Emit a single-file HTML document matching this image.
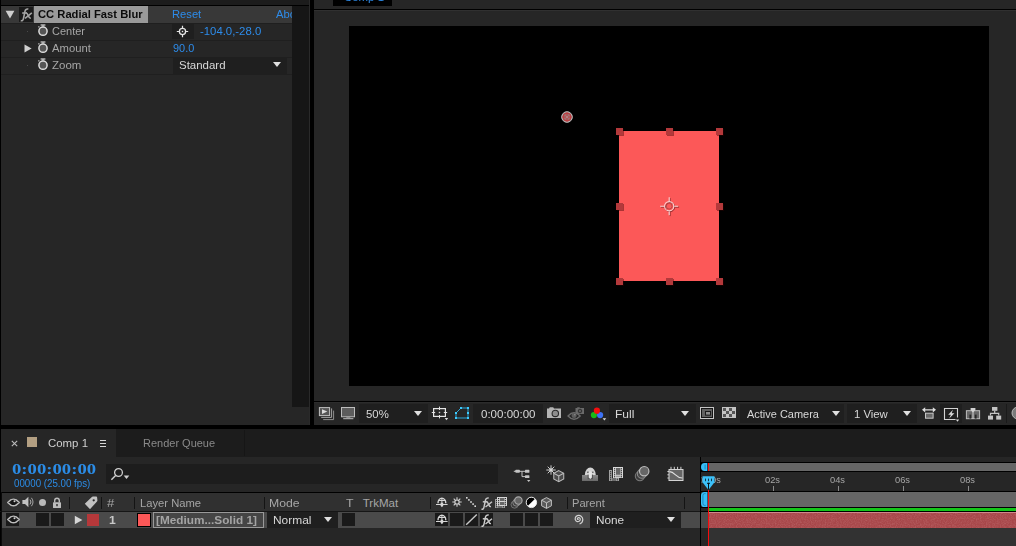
<!DOCTYPE html>
<html>
<head>
<meta charset="utf-8">
<title>After Effects</title>
<style>
html,body{margin:0;padding:0;}
body{width:1016px;height:546px;overflow:hidden;background:#000;position:relative;font-family:"Liberation Sans",sans-serif;font-size:12px;color:#a8a8a8;}
.a{position:absolute;}
.t{position:absolute;white-space:nowrap;transform-origin:0 50%;}
svg{position:absolute;overflow:visible;}
.bx{position:absolute;width:13px;height:13px;background:#1a1a1a;top:513px;}
.sep{position:absolute;width:1px;height:12px;top:497px;background:#141414;}
.dd{position:absolute;background:#1f1f1f;}
.arr{position:absolute;width:0;height:0;margin-left:0.2px;border-left:4.8px solid transparent;border-right:4.8px solid transparent;border-top:5.6px solid #e0e0e0;}
</style>
</head>
<body>

<!-- ================= EFFECT CONTROLS PANEL ================= -->
<div class="a" style="left:1px;top:0;width:309px;height:425px;background:#262626;"></div>
<div class="a" style="left:1px;top:0;width:309px;height:5px;background:#1c1c1c;"></div>
<div class="a" style="left:0;top:5px;width:310px;height:1px;background:#000;"></div>
<div class="a" style="left:1px;top:6px;width:291px;height:17px;background:#383838;"></div>
<div class="a" style="left:1px;top:23px;width:291px;height:1px;background:#1f1f1f;"></div>
<div class="a" style="left:1px;top:40px;width:291px;height:1px;background:#1f1f1f;"></div>
<div class="a" style="left:1px;top:57px;width:291px;height:1px;background:#1f1f1f;"></div>
<div class="a" style="left:1px;top:74px;width:291px;height:1px;background:#1f1f1f;"></div>
<div class="a" style="left:292px;top:6px;width:17px;height:401px;background:#161616;"></div>
<div class="a" style="left:309px;top:0;width:1px;height:425px;background:#2a2a2a;"></div>
<div class="a" style="left:34px;top:6px;width:114px;height:17px;background:#9a9a9a;"></div>
<div class="a" style="left:19px;top:7px;width:14px;height:15px;background:#1a1a1a;"></div>
<div class="dd" style="left:172px;top:24px;width:22px;height:15px;"></div>
<div class="dd" style="left:173px;top:58px;width:114px;height:16px;"></div>
<div class="arr" style="left:273px;top:62px;"></div>

<svg style="left:5px;top:10px" width="10" height="9" viewBox="0 0 10 9"><path d="M0.6 0.8 L9.4 0.8 L5 8.4 Z" fill="#cfcfcf"/></svg>
<svg style="left:19.6px;top:8.2px" width="13.2" height="13.6" viewBox="0 0 12 13"><g fill="none" stroke="#a4a4a4" stroke-width="1.55"><path d="M0.4 12.1 C1.9 12.5 2.7 11.7 3 10.2 L4.5 3 C4.85 1.4 5.9 0.7 7.7 1"/><path d="M1.8 4.8 H6.4"/><path d="M5.4 4.8 C6.6 4.6 6.9 5.6 7.5 7.2 C8.1 8.8 8.6 9.9 10 9.6"/><path d="M11 4.7 L4.5 10"/></g></svg>
<svg style="left:36.5px;top:23px" width="12" height="14" viewBox="0 0 12 14"><circle cx="6" cy="8.2" r="4.1" fill="#555" stroke="#dcdcdc" stroke-width="1.5"/><rect x="3.6" y="1.4" width="4.8" height="1.2" fill="#d4d4d4"/><rect x="5.5" y="2" width="1" height="2" fill="#d4d4d4"/><rect x="1.2" y="3.2" width="1.3" height="1.3" fill="#bdbdbd"/></svg><svg style="left:36.5px;top:40px" width="12" height="14" viewBox="0 0 12 14"><circle cx="6" cy="8.2" r="4.1" fill="#555" stroke="#dcdcdc" stroke-width="1.5"/><rect x="3.6" y="1.4" width="4.8" height="1.2" fill="#d4d4d4"/><rect x="5.5" y="2" width="1" height="2" fill="#d4d4d4"/><rect x="1.2" y="3.2" width="1.3" height="1.3" fill="#bdbdbd"/></svg><svg style="left:36.5px;top:57px" width="12" height="14" viewBox="0 0 12 14"><circle cx="6" cy="8.2" r="4.1" fill="#555" stroke="#dcdcdc" stroke-width="1.5"/><rect x="3.6" y="1.4" width="4.8" height="1.2" fill="#d4d4d4"/><rect x="5.5" y="2" width="1" height="2" fill="#d4d4d4"/><rect x="1.2" y="3.2" width="1.3" height="1.3" fill="#bdbdbd"/></svg>
<div class="a" style="left:27px;top:31px;width:1px;height:1px;background:#4a4a4a;"></div>
<div class="a" style="left:27px;top:65px;width:1px;height:1px;background:#4a4a4a;"></div>
<svg style="left:24px;top:44px" width="8" height="9" viewBox="0 0 8 9"><path d="M0.5 0.6 L7.6 4.5 L0.5 8.4 Z" fill="#cfcfcf"/></svg>
<svg style="left:176px;top:25px" width="13" height="13" viewBox="0 0 13 13"><g stroke="#e4e4e4" fill="none"><circle cx="6.5" cy="6.5" r="3.1" stroke-width="1.3"/><path d="M0.8 6.5H3.4M9.6 6.5H12.2M6.5 0.8V3.4M6.5 9.6V12.2" stroke-width="1.2"/></g><rect x="5.8" y="5.8" width="1.4" height="1.4" fill="#e4e4e4"/></svg>


<!-- ================= COMP VIEWER PANEL ================= -->
<div class="a" style="left:314px;top:0;width:702px;height:425px;background:#262626;"></div>
<div class="a" style="left:333px;top:0;width:59px;height:6px;background:#000;"></div>
<div class="a" style="left:314px;top:9px;width:702px;height:1px;background:#000;"></div>
<div class="a" style="left:314px;top:10px;width:702px;height:1px;background:#303030;"></div>
<div class="a" style="left:349px;top:26px;width:640px;height:360px;background:#000;"></div>
<div class="a" style="left:619px;top:131px;width:100px;height:150px;background:#fc5858;"></div>
<div class="a" style="left:616px;top:128px;width:7px;height:7px;background:#b3393b;box-shadow:1px 1px 0 rgba(50,0,0,0.4);"></div>
<div class="a" style="left:616px;top:203px;width:7px;height:7px;background:#b3393b;box-shadow:1px 1px 0 rgba(50,0,0,0.4);"></div>
<div class="a" style="left:616px;top:278px;width:7px;height:7px;background:#b3393b;box-shadow:1px 1px 0 rgba(50,0,0,0.4);"></div>
<div class="a" style="left:666px;top:128px;width:7px;height:7px;background:#b3393b;box-shadow:1px 1px 0 rgba(50,0,0,0.4);"></div>
<div class="a" style="left:666px;top:278px;width:7px;height:7px;background:#b3393b;box-shadow:1px 1px 0 rgba(50,0,0,0.4);"></div>
<div class="a" style="left:716px;top:128px;width:7px;height:7px;background:#b3393b;box-shadow:1px 1px 0 rgba(50,0,0,0.4);"></div>
<div class="a" style="left:716px;top:203px;width:7px;height:7px;background:#b3393b;box-shadow:1px 1px 0 rgba(50,0,0,0.4);"></div>
<div class="a" style="left:716px;top:278px;width:7px;height:7px;background:#b3393b;box-shadow:1px 1px 0 rgba(50,0,0,0.4);"></div>

<svg style="left:560px;top:110px" width="14" height="14" viewBox="0 0 14 14"><circle cx="7" cy="7" r="5.3" fill="#9c7474" stroke="#c4c0c0" stroke-width="1"/><circle cx="7" cy="7" r="3.9" fill="none" stroke="#c4383c" stroke-width="1"/><path d="M7 2.4 V11.6 M2.4 7 H11.6" stroke="#c4383c" stroke-width="0.9" fill="none"/><circle cx="7" cy="7" r="1" fill="#b09090"/></svg>
<svg style="left:659px;top:196px" width="21" height="21" viewBox="0 0 21 21">
<g fill="none" stroke="#8e2c2e" stroke-width="1" transform="translate(0.9,0.9)"><circle cx="10.2" cy="10.2" r="4.6"/><path d="M10.2 1.2 V5.2 M10.2 15.2 V19.2 M1.2 10.2 H5.2 M15.2 10.2 H19.2"/></g>
<g fill="none" stroke="#f8d4d4" stroke-width="1.1"><circle cx="10.2" cy="10.2" r="4.6"/><path d="M10.2 1.2 V5.2 M10.2 15.2 V19.2 M1.2 10.2 H5.2 M15.2 10.2 H19.2"/></g>
<circle cx="10.2" cy="10.2" r="2.9" fill="none" stroke="#b84848" stroke-width="1"/></svg>
<div class="a" style="left:314px;top:401px;width:702px;height:1px;background:#000;"></div>
<div class="a" style="left:314px;top:402px;width:702px;height:1px;background:#2c2c2c;"></div>
<div class="dd" style="left:359px;top:404px;width:69px;height:19px;"></div>
<div class="dd" style="left:473px;top:404px;width:70px;height:19px;"></div>
<div class="dd" style="left:609px;top:404px;width:87px;height:19px;"></div>
<div class="dd" style="left:740px;top:404px;width:104px;height:19px;"></div>
<div class="dd" style="left:847px;top:404px;width:70px;height:19px;"></div>
<div class="arr" style="left:414px;top:411px;"></div>
<div class="arr" style="left:681px;top:411px;"></div>
<div class="arr" style="left:832px;top:411px;"></div>
<div class="arr" style="left:903px;top:411px;"></div>

<!-- always preview -->
<svg style="left:318px;top:406px" width="18" height="16" viewBox="0 0 18 16">
<path d="M5.2 13.6 H15.6 V4.6" fill="none" stroke="#8e8e8e" stroke-width="1"/>
<path d="M3.2 11.4 H13.6 V2.4" fill="none" stroke="#a2a2a2" stroke-width="1"/>
<rect x="1.4" y="1.6" width="10.2" height="8" fill="#565656" stroke="#c0c0c0"/>
<path d="M4 3.2 L9.3 5.6 L4 8 Z" fill="#dadada"/></svg>
<!-- monitor -->
<svg style="left:340px;top:406px" width="17" height="15" viewBox="0 0 17 15">
<rect x="1.5" y="1.5" width="13" height="9.3" fill="#5c5c5c" stroke="#bdbdbd"/>
<rect x="6.3" y="11" width="4" height="1.2" fill="#8a8a8a"/><rect x="3.2" y="12.2" width="10.2" height="1" fill="#bdbdbd"/></svg>
<!-- grid/guides -->
<svg style="left:431px;top:405px" width="19" height="17" viewBox="0 0 19 17">
<rect x="2.6" y="3.6" width="11.8" height="7.8" fill="none" stroke="#e4e4e4" stroke-width="1.2"/>
<path d="M0.8 7.5H4.2M12.8 7.5H16.2M8.5 1.6V5M8.5 10V13.4" stroke="#e4e4e4" stroke-width="1" fill="none"/>
<rect x="7.8" y="6.8" width="1.4" height="1.4" fill="#cfcfcf"/>
<path d="M13.7 13.1 L17.2 13.1 L15.45 15.3 Z" fill="#dcdcdc"/></svg>
<!-- mask toggle -->
<svg style="left:454px;top:405px" width="17" height="16" viewBox="0 0 17 16">
<path d="M7 3 L14 3 L14 13 L2 13 L2 8 Z" fill="none" stroke="#2cb4ea" stroke-width="0.9"/>
<g fill="#3ccaff"><rect x="6" y="2" width="2" height="2"/><rect x="13" y="2" width="2" height="2"/><rect x="13" y="7" width="2" height="2"/><rect x="13" y="12" width="2" height="2"/><rect x="1" y="12" width="2" height="2"/><rect x="1" y="7" width="2" height="2"/></g></svg>
<!-- camera -->
<svg style="left:546px;top:405px" width="17" height="15" viewBox="0 0 17 15">
<path d="M1 3.4 H3 L3.8 2.2 H7.2 L8 3.4 H15 V13 H1 Z" fill="#b4b4b4"/>
<circle cx="9.3" cy="8.4" r="3.2" fill="#8e8e8e" stroke="#2a2a2a" stroke-width="1.1"/></svg>
<!-- show snapshot (dim) -->
<svg style="left:567px;top:405px" width="19" height="16" viewBox="0 0 19 16">
<path d="M8.5 3 H10 L10.5 2.2 H12.5 L13 3 H17 V9 H8.5 Z" fill="#6a6a6a"/>
<circle cx="13" cy="6" r="1.8" fill="#5a5a5a" stroke="#2a2a2a" stroke-width="0.9"/>
<path d="M1 11 Q7 4.5 13.2 11 Q7 17.5 1 11 Z" fill="#262626" stroke="#6c6c6c" stroke-width="1.3"/>
<circle cx="7.1" cy="10.6" r="2.5" fill="#5e5e5e"/><circle cx="7.8" cy="9.8" r="0.8" fill="#8a8a8a"/></svg>
<!-- RGB channels -->
<svg style="left:590px;top:406px" width="18" height="16" viewBox="0 0 18 16">
<circle cx="3.9" cy="9.1" r="3.1" fill="#19bb19"/><circle cx="10.1" cy="9.1" r="3.1" fill="#3d72f5"/><circle cx="6.9" cy="4.7" r="3.1" fill="#f50e0e"/>
<path d="M12.6 12.2 L16.2 12.2 L14.4 14.4 Z" fill="#dcdcdc"/></svg>
<!-- ROI -->
<svg style="left:699px;top:406px" width="16" height="14" viewBox="0 0 16 14">
<rect x="1.5" y="1.5" width="13" height="11" fill="#151515" stroke="#c6c6c6"/>
<rect x="3" y="3" width="10" height="8" fill="#616161"/>
<rect x="6" y="5" width="6" height="4.6" fill="#1a1a1a"/><rect x="7" y="6" width="4" height="2.6" fill="#8c8c8c"/></svg>
<!-- transparency grid -->
<svg style="left:722px;top:407px" width="14" height="11" viewBox="0 0 14 11">
<rect x="0" y="0" width="14" height="11" fill="#c4c4c4"/>
<g fill="#565656"><rect x="1" y="1" width="3" height="3"/><rect x="7" y="1" width="3" height="3"/><rect x="4" y="4" width="3" height="3"/><rect x="10" y="4" width="3" height="3"/><rect x="1" y="7" width="3" height="3"/><rect x="7" y="7" width="3" height="3"/></g></svg>
<!-- pixel aspect -->
<svg style="left:921px;top:405px" width="16" height="16" viewBox="0 0 16 16">
<path d="M1 4.8 L4.2 2.2 V4.2 H11.8 V2.2 L15 4.8 L11.8 7.4 V5.4 H4.2 V7.4 Z" fill="#dedede"/>
<rect x="4.5" y="8.2" width="7.6" height="5" fill="#6a6a6a" stroke="#c8c8c8"/></svg>
<!-- fast previews -->
<div class="dd" style="left:940px;top:404px;width:22px;height:19px;"></div>
<svg style="left:943px;top:406.6px" width="18" height="16" viewBox="0 0 18 16">
<path d="M12.6 12.5 H1.5 V1.5 H14.5 V10.6" fill="none" stroke="#d2d2d2" stroke-width="1.1"/>
<path d="M10 2.8 L5.2 7.8 H7.9 L6.2 11.6 L11.4 6.2 H8.6 Z" fill="#dcdcdc"/>
<path d="M12.8 12.6 L16.2 12.6 L14.5 14.7 Z" fill="#dcdcdc"/></svg>
<!-- timeline -->
<svg style="left:965px;top:406px" width="16" height="15" viewBox="0 0 16 15">
<rect x="1.4" y="4.7" width="13.2" height="8" fill="#666" stroke="#bdbdbd"/>
<rect x="4.4" y="8.6" width="1.8" height="4" fill="#262626"/><rect x="9.8" y="8.6" width="1.8" height="4" fill="#262626"/>
<path d="M5.6 2 H10.4 V4 L8 6.6 L5.6 4 Z" fill="#d2d2d2"/>
<rect x="7.5" y="5" width="1" height="7.8" fill="#d2d2d2"/></svg>
<!-- flowchart -->
<svg style="left:987px;top:406px" width="15" height="15" viewBox="0 0 15 15">
<g fill="#c4c4c4"><rect x="5" y="1" width="5.4" height="3.8"/><rect x="1" y="9.6" width="5" height="4"/><rect x="9.2" y="9.6" width="5" height="4"/></g>
<path d="M7.7 4.8 V7.4 M3.5 9.6 V7.4 H11.7 V9.6" fill="none" stroke="#c4c4c4" stroke-width="1.2"/></svg>
<div class="a" style="left:1006px;top:404px;width:1px;height:19px;background:#1a1a1a;"></div>
<svg style="left:1011px;top:406px" width="5" height="14" viewBox="0 0 5 14"><circle cx="7" cy="7" r="6" fill="#7a7a7a" stroke="#b8b8b8"/></svg>


<!-- ================= TIMELINE PANEL ================= -->
<div class="a" style="left:1px;top:429px;width:1015px;height:117px;background:#262626;"></div>
<div class="a" style="left:116px;top:429px;width:900px;height:28px;background:#1c1c1c;"></div>
<div class="a" style="left:244px;top:430px;width:1px;height:26px;background:#161616;"></div>
<div class="a" style="left:106px;top:464px;width:392px;height:20px;background:#1d1d1d;"></div>
<div class="a" style="left:2px;top:493px;width:698px;height:18px;background:#303030;"></div>
<div class="a" style="left:0;top:492px;width:1016px;height:1px;background:#000;"></div>
<div class="a" style="left:0;top:511px;width:1016px;height:1px;background:#161616;"></div>
<div class="a" style="left:2px;top:512px;width:698px;height:16px;background:#4a4a4a;"></div>
<div class="a" style="left:700px;top:457px;width:1px;height:89px;background:#000;"></div>
<div class="a" style="left:1px;top:492px;width:1px;height:54px;background:#0a0a0a;"></div>
<div class="a" style="left:27px;top:437px;width:10px;height:10px;background:#b39f82;"></div>
<!-- header separators -->
<div class="sep" style="left:69px;"></div>
<div class="sep" style="left:101px;"></div>
<div class="sep" style="left:134px;"></div>
<div class="sep" style="left:264px;"></div>
<div class="sep" style="left:430px;"></div>
<div class="sep" style="left:567px;"></div>
<div class="sep" style="left:684px;"></div>
<!-- row boxes -->
<div class="bx" style="left:6px;"></div>
<div class="bx" style="left:36px;"></div>
<div class="bx" style="left:51px;"></div>
<div class="a" style="left:87px;top:514px;width:12px;height:12px;background:#b5383a;"></div>
<div class="a" style="left:137px;top:513px;width:14px;height:14px;background:#000;"></div>
<div class="a" style="left:138px;top:514px;width:12px;height:12px;background:#fc5858;"></div>
<div class="a" style="left:153px;top:512px;width:111px;height:16px;background:#9a9a9a;"></div>
<div class="a" style="left:154px;top:513px;width:109px;height:14px;background:#454545;"></div>
<div class="dd" style="left:267px;top:512px;width:71px;height:16px;"></div>
<div class="arr" style="left:324px;top:517px;"></div>
<div class="bx" style="left:342px;"></div>
<div class="bx" style="left:435px;"></div>
<div class="bx" style="left:450px;"></div>
<div class="bx" style="left:465px;"></div>
<div class="bx" style="left:480px;"></div>
<div class="bx" style="left:510px;"></div>
<div class="bx" style="left:525px;"></div>
<div class="bx" style="left:540px;"></div>
<div class="dd" style="left:590px;top:512px;width:91px;height:16px;"></div>
<div class="arr" style="left:667px;top:517px;"></div>
<!-- right time area -->
<div class="a" style="left:701px;top:462px;width:315px;height:10px;background:#000;"></div>
<div class="a" style="left:709px;top:463px;width:307px;height:8px;background:#666;"></div>
<div class="a" style="left:701px;top:491px;width:315px;height:21px;background:#000;"></div>
<div class="a" style="left:701px;top:492px;width:8px;height:15px;background:#262626;"></div>
<div class="a" style="left:709px;top:492px;width:307px;height:15px;background:#666;"></div>
<div class="a" style="left:709px;top:508px;width:307px;height:3px;background:#14c61a;"></div>
<div class="a" style="left:701px;top:508px;width:8px;height:3px;background:#262626;"></div>
<div class="a" style="left:701px;top:512px;width:8px;height:16px;background:#4a4a4a;"></div>
<div class="a" style="left:709px;top:512px;width:307px;height:16px;background:#a8474a;"></div>
<svg style="left:709px;top:512px" width="307" height="16"><filter id="nz" x="0" y="0" width="100%" height="100%"><feTurbulence type="fractalNoise" baseFrequency="0.8" numOctaves="2" seed="3" result="n"/><feColorMatrix type="matrix" values="0 0 0 0 1  0 0 0 0 0.75  0 0 0 0 0.75  0.9 0 0 0 -0.33"/></filter><rect width="307" height="16" filter="url(#nz)" opacity="0.32"/></svg>
<div class="a" style="left:709px;top:512px;width:307px;height:1px;background:#cf8a8c;"></div>
<div class="a" style="left:709px;top:528px;width:307px;height:18px;background:#323232;"></div>
<!-- ticks -->
<div class="a" style="left:773px;top:486px;width:1px;height:5px;background:#8a8a8a;"></div>
<div class="a" style="left:838px;top:486px;width:1px;height:5px;background:#8a8a8a;"></div>
<div class="a" style="left:903px;top:486px;width:1px;height:5px;background:#8a8a8a;"></div>
<div class="a" style="left:968px;top:486px;width:1px;height:5px;background:#8a8a8a;"></div>
<div class="t" id="e1" style="left:37.51px;top:6.52px;height:15px;line-height:15px;font-size:11.5px;color:#0c0c0c;font-weight:bold;transform:scaleX(0.9742);">CC Radial Fast Blur</div>
<div class="t" id="e2" style="left:171.88px;top:6.52px;height:15px;line-height:15px;font-size:11.5px;color:#2d8ceb;transform:scaleX(0.9727);">Reset</div>
<div class="t" id="e3" style="left:276.00px;top:6.52px;height:15px;line-height:15px;font-size:11.5px;color:#2d8ceb;clip-path:inset(0 20px 0 0);transform:scaleX(0.9727);">About...</div>
<div class="t" id="e4" style="left:51.63px;top:23.52px;height:15px;line-height:15px;font-size:11.5px;color:#a6a6a6;transform:scaleX(0.9541);">Center</div>
<div class="t" id="e5" style="left:52.00px;top:40.52px;height:15px;line-height:15px;font-size:11.5px;color:#a6a6a6;transform:scaleX(0.9799);">Amount</div>
<div class="t" id="e6" style="left:51.80px;top:57.52px;height:15px;line-height:15px;font-size:11.5px;color:#a6a6a6;transform:scaleX(0.9983);">Zoom</div>
<div class="t" id="e7" style="left:200.06px;top:23.52px;height:15px;line-height:15px;font-size:11.5px;color:#2d8ceb;transform:scaleX(0.9869);">-104.0,-28.0</div>
<div class="t" id="e8" style="left:173.08px;top:40.52px;height:15px;line-height:15px;font-size:11.5px;color:#2d8ceb;transform:scaleX(0.9489);">90.0</div>
<div class="t" id="e9" style="left:178.65px;top:57.52px;height:15px;line-height:15px;font-size:11.5px;color:#d8d8d8;transform:scaleX(0.9978);">Standard</div>
<div class="t" id="c1" style="left:344.00px;top:-10.48px;height:15px;line-height:15px;font-size:11.5px;color:#2d8ceb;transform:scaleX(0.9936);">Comp 1</div>
<div class="t" id="v1" style="left:366.26px;top:406.52px;height:15px;line-height:15px;font-size:11.5px;color:#d8d8d8;transform:scaleX(0.9889);">50%</div>
<div class="t" id="v2" style="left:481.25px;top:406.52px;height:15px;line-height:15px;font-size:11.5px;color:#d8d8d8;transform:scaleX(1.0019);">0:00:00:00</div>
<div class="t" id="v3" style="left:614.96px;top:406.52px;height:15px;line-height:15px;font-size:11.5px;color:#d8d8d8;transform:scaleX(1.0448);">Full</div>
<div class="t" id="v4" style="left:747.00px;top:406.52px;height:15px;line-height:15px;font-size:11.5px;color:#d8d8d8;transform:scaleX(0.9536);">Active Camera</div>
<div class="t" id="v5" style="left:853.76px;top:406.52px;height:15px;line-height:15px;font-size:11.5px;color:#d8d8d8;transform:scaleX(0.9851);">1 View</div>
<div class="t" id="t1" style="left:47.50px;top:435.52px;height:15px;line-height:15px;font-size:11.5px;color:#d0d0d0;transform:scaleX(0.9936);">Comp 1</div>
<div class="t" id="t2" style="left:143.49px;top:435.52px;height:15px;line-height:15px;font-size:11.5px;color:#8a8a8a;transform:scaleX(0.9554);">Render Queue</div>
<div class="t" id="t3" style="left:11.95px;top:458.54px;height:20px;line-height:20px;font-size:15px;color:#2b8ce6;font-family:'Liberation Serif',serif;font-weight:bold;transform:scaleX(1.2468);">0:00:00:00</div>
<div class="t" id="t4" style="left:13.81px;top:476.84px;height:13px;line-height:13px;font-size:10px;color:#2b8ce6;transform:scaleX(0.9736);">00000 (25.00 fps)</div>
<div class="t" id="t5" style="left:106.96px;top:495.52px;height:15px;line-height:15px;font-size:11.5px;color:#a6a6a6;transform:scaleX(1.1386);">#</div>
<div class="t" id="t6" style="left:139.52px;top:495.52px;height:15px;line-height:15px;font-size:11.5px;color:#a6a6a6;transform:scaleX(0.9755);">Layer Name</div>
<div class="t" id="t7" style="left:268.94px;top:495.52px;height:15px;line-height:15px;font-size:11.5px;color:#a6a6a6;transform:scaleX(1.0642);">Mode</div>
<div class="t" id="t8" style="left:346.23px;top:495.52px;height:15px;line-height:15px;font-size:11.5px;color:#a6a6a6;transform:scaleX(1.0769);">T</div>
<div class="t" id="t9" style="left:362.75px;top:495.52px;height:15px;line-height:15px;font-size:11.5px;color:#a6a6a6;transform:scaleX(1.0000);">TrkMat</div>
<div class="t" id="t10" style="left:572.32px;top:495.52px;height:15px;line-height:15px;font-size:11.5px;color:#a6a6a6;transform:scaleX(0.9682);">Parent</div>
<div class="t" id="t11" style="left:108.72px;top:512.52px;height:15px;line-height:15px;font-size:11.5px;color:#c8c8c8;font-weight:bold;transform:scaleX(1.0555);">1</div>
<div class="t" id="t12" style="left:156.18px;top:512.52px;height:15px;line-height:15px;font-size:11.5px;color:#a4a4a4;font-weight:bold;transform:scaleX(1.0252);">[Medium...Solid 1]</div>
<div class="t" id="t13" style="left:272.96px;top:512.52px;height:15px;line-height:15px;font-size:11.5px;color:#d8d8d8;transform:scaleX(1.0369);">Normal</div>
<div class="t" id="t14" style="left:595.79px;top:512.52px;height:15px;line-height:15px;font-size:11.5px;color:#d8d8d8;transform:scaleX(1.0249);">None</div>
<div class="t" id="r1" style="left:765.24px;top:473.68px;height:12px;line-height:12px;font-size:9px;color:#a6a6a6;transform:scaleX(1.0357);">02s</div>
<div class="t" id="r2" style="left:830.24px;top:473.68px;height:12px;line-height:12px;font-size:9px;color:#a6a6a6;transform:scaleX(1.0357);">04s</div>
<div class="t" id="r3" style="left:895.24px;top:473.68px;height:12px;line-height:12px;font-size:9px;color:#a6a6a6;transform:scaleX(1.0357);">06s</div>
<div class="t" id="r4" style="left:960.24px;top:473.68px;height:12px;line-height:12px;font-size:9px;color:#a6a6a6;transform:scaleX(1.0357);">08s</div>
<div class="t" id="r0" style="left:697.80px;top:473.68px;height:12px;line-height:12px;font-size:9px;color:#a6a6a6;clip-path:inset(0 0 0 3.4px);transform:scaleX(1.0357);">0:00s</div>
<div class="a" style="left:292px;top:6px;width:17px;height:17px;background:#161616;"></div>

<!-- tab close / menu -->
<svg style="left:11px;top:440px" width="7" height="7" viewBox="0 0 7 7"><path d="M0.8 0.8 L6.2 6.2 M6.2 0.8 L0.8 6.2" stroke="#bcbcbc" stroke-width="1.1" fill="none"/></svg>
<div class="a" style="left:100px;top:440px;width:6px;height:1px;background:#d6d6d6;box-shadow:0 3px 0 #d6d6d6,0 6px 0 #d6d6d6;"></div>
<!-- search -->
<svg style="left:110px;top:466px" width="20" height="16" viewBox="0 0 20 16"><circle cx="8.5" cy="6.5" r="3.9" fill="none" stroke="#cfcfcf" stroke-width="1.3"/><path d="M5.6 9.6 L1.4 13.8" stroke="#cfcfcf" stroke-width="1.4" fill="none"/><path d="M13.7 9.6 L19.3 9.6 L16.5 13 Z" fill="#cfcfcf"/></svg>
<!-- top icons -->
<svg style="left:513px;top:468px" width="18" height="15" viewBox="0 0 18 15"><g fill="#c4c4c4"><rect x="2.3" y="1.8" width="4.6" height="3" rx="0.8"/><rect x="12" y="1.8" width="4.4" height="3" rx="0.6"/><rect x="12" y="7.2" width="4.4" height="2.8" rx="0.6"/><path d="M14 12 L17.4 12 L15.7 14 Z"/></g><path d="M0.8 3.3 H12 M9 3.3 V8.6 H12" stroke="#c4c4c4" stroke-width="1" fill="none"/></svg>
<svg style="left:546px;top:464.6px" width="10" height="10" viewBox="0 0 10 10"><path d="M5 0.3 V9.7 M0.3 5 H9.7 M1.7 1.7 L8.3 8.3 M8.3 1.7 L1.7 8.3" stroke="#cdcdcd" stroke-width="1" fill="none"/><circle cx="5" cy="5" r="1.7" fill="#d4d4d4"/></svg>
<svg style="left:553px;top:470px" width="11.5" height="12.2" viewBox="0 0 11 12"><path d="M5.5 0.6 L10.4 3.2 V8.8 L5.5 11.4 L0.6 8.8 V3.2 Z" fill="#4a4a4a" stroke="#bdbdbd" stroke-width="1"/><path d="M0.6 3.2 L5.5 5.8 L10.4 3.2 M5.5 5.8 V11.4" fill="none" stroke="#bdbdbd" stroke-width="1"/></svg>
<div class="a" style="left:582px;top:475px;width:16px;height:6px;background:linear-gradient(#888,#6a6a6a);"></div>
<svg style="left:584px;top:466px" width="13" height="14" viewBox="0 0 13 14"><path d="M0.8 9 A5.5 7.4 0 0 1 11.8 9 Z" fill="#d4d4d4"/><rect x="3.6" y="8.6" width="5.4" height="4.6" fill="#555"/><path d="M3 6.2 H5 M7.6 6.2 H9.6" stroke="#444" stroke-width="1" fill="none"/><path d="M4.7 5.6 H7.9 V11.4 L6.3 13 L4.7 11.4 Z" fill="#e6e6e6"/></svg>
<svg style="left:609px;top:470px" width="10" height="11" viewBox="0 0 10 11"><rect width="10" height="11" fill="#a2a2a2"/><rect x="3" y="0" width="7" height="8" fill="#262626"/><rect x="3" y="8" width="4" height="3" fill="#6c6c6c"/><rect x="1" y="1.2" width="1.2" height="1.1" fill="#2a2a2a"/><rect x="7.8" y="1.2" width="1.2" height="1.1" fill="#2a2a2a"/><rect x="1" y="3.2" width="1.2" height="1.1" fill="#2a2a2a"/><rect x="7.8" y="3.2" width="1.2" height="1.1" fill="#2a2a2a"/><rect x="1" y="5.2" width="1.2" height="1.1" fill="#2a2a2a"/><rect x="7.8" y="5.2" width="1.2" height="1.1" fill="#2a2a2a"/><rect x="1" y="7.2" width="1.2" height="1.1" fill="#2a2a2a"/><rect x="7.8" y="7.2" width="1.2" height="1.1" fill="#2a2a2a"/><rect x="1" y="9.2" width="1.2" height="1.1" fill="#2a2a2a"/><rect x="7.8" y="9.2" width="1.2" height="1.1" fill="#2a2a2a"/></svg>
<svg style="left:613px;top:467px" width="10" height="11" viewBox="0 0 10 11"><rect width="10" height="11" fill="#dadada"/><rect x="3" y="1" width="4.4" height="6.8" fill="#666"/><rect x="3" y="8.6" width="4.4" height="1.6" fill="#9c9c9c"/><rect x="1" y="1.2" width="1.2" height="1.1" fill="#2a2a2a"/><rect x="7.8" y="1.2" width="1.2" height="1.1" fill="#2a2a2a"/><rect x="1" y="3.2" width="1.2" height="1.1" fill="#2a2a2a"/><rect x="7.8" y="3.2" width="1.2" height="1.1" fill="#2a2a2a"/><rect x="1" y="5.2" width="1.2" height="1.1" fill="#2a2a2a"/><rect x="7.8" y="5.2" width="1.2" height="1.1" fill="#2a2a2a"/><rect x="1" y="7.2" width="1.2" height="1.1" fill="#2a2a2a"/><rect x="7.8" y="7.2" width="1.2" height="1.1" fill="#2a2a2a"/><rect x="1" y="9.2" width="1.2" height="1.1" fill="#2a2a2a"/><rect x="7.8" y="9.2" width="1.2" height="1.1" fill="#2a2a2a"/></svg>
<svg style="left:634px;top:465px" width="17" height="17" viewBox="0 0 17 17"><circle cx="5.9" cy="11.1" r="4.6" fill="#3a3a3a" stroke="#777" stroke-width="1.1"/><circle cx="7.9" cy="8.7" r="4.6" fill="#484848" stroke="#8c8c8c" stroke-width="1.1"/><circle cx="10.2" cy="6.2" r="4.7" fill="#666" stroke="#bcbcbc" stroke-width="1.2"/></svg>
<svg style="left:667px;top:466px" width="18" height="16" viewBox="0 0 18 16"><path d="M4 0.8 V3 M7.3 0.8 V3 M10.6 0.8 V3 M13.9 0.8 V3 M0.4 5.5 H2 M0.4 8.8 H2 M0.4 12 H2" stroke="#d4d4d4" stroke-width="1" fill="none"/><rect x="2" y="3.5" width="14" height="11" fill="#666" stroke="#d4d4d4" stroke-width="1"/><path d="M2.6 5.6 C8 5.6 8.6 12 15.4 12" fill="none" stroke="#e0e0e0" stroke-width="1.1"/></svg>
<!-- header icons -->
<svg style="left:7px;top:498px" width="13" height="9" viewBox="0 0 13 9"><path d="M0.7 4.5 Q6.5 -2 12.3 4.5 Q6.5 11 0.7 4.5 Z" fill="#242424" stroke="#bcbcbc" stroke-width="1.35" stroke-linejoin="round"/><circle cx="6.4" cy="4.4" r="2.7" fill="#161616"/><circle cx="7.5" cy="3.3" r="1" fill="#cfcfcf"/></svg>
<svg style="left:22px;top:496px" width="12" height="12" viewBox="0 0 12 12"><path d="M0.4 4 H3 L6.4 0.8 V11.2 L3 8 H0.4 Z" fill="#c2c2c2"/><path d="M8 3.6 Q10 6 8 8.4" fill="none" stroke="#b4b4b4" stroke-width="1"/><path d="M9.4 1.8 Q12.6 6 9.4 10.2" fill="none" stroke="#a6a6a6" stroke-width="1"/></svg>
<div class="a" style="left:39px;top:499px;width:7px;height:7px;border-radius:50%;background:#bababa;"></div>
<svg style="left:52px;top:497px" width="10" height="12" viewBox="0 0 10 12"><path d="M2.7 5.4 V3.6 A2.3 2.3 0 0 1 7.3 3.6 V5.4" fill="none" stroke="#bcbcbc" stroke-width="1.4"/><rect x="1" y="5.2" width="8" height="5.8" rx="0.6" fill="#bcbcbc"/><rect x="4.3" y="7" width="1.4" height="2.2" fill="#2a2a2a"/></svg>
<svg style="left:84px;top:496px" width="14" height="14" viewBox="0 0 14 14"><path d="M0.8 7.8 L8.1 0.8 Q8.5 0.4 9.2 0.4 L12.2 0.4 Q13 0.4 13.1 1.2 L13.4 4.2 Q13.5 4.9 13 5.4 L6.4 12.8 Q6 13.2 5.6 12.8 Z" fill="#c2c2c2"/><circle cx="9.7" cy="4.3" r="1.15" fill="#2a2a2a"/></svg>
<svg style="left:436px;top:497px" width="12" height="11" viewBox="0 0 12 11"><path d="M2 6.2 A3.9 4.9 0 0 1 9.8 6.2" fill="none" stroke="#d6d6d6" stroke-width="1.4"/><path d="M5.9 1 V6.4 M2.2 3.5 H9.6" stroke="#d6d6d6" stroke-width="1" fill="none"/><rect x="0" y="7" width="11.6" height="1" fill="#d6d6d6"/><path d="M4.6 5.8 H7.2 V8.8 L5.9 10.3 L4.6 8.8 Z" fill="#d6d6d6"/></svg>
<svg style="left:451.5px;top:497px" width="10" height="10" viewBox="0 0 10 10"><path d="M5 0.3 V2 M5 8 V9.7 M0.3 5 H2 M8 5 H9.7 M1.7 1.7 L2.9 2.9 M7.1 7.1 L8.3 8.3 M8.3 1.7 L7.1 2.9 M2.9 7.1 L1.7 8.3" stroke="#d2d2d2" stroke-width="1.1" fill="none"/><circle cx="5" cy="5" r="2.2" fill="none" stroke="#d2d2d2" stroke-width="1.3"/></svg>
<svg style="left:465px;top:496px" width="12" height="12" viewBox="0 0 12 12"><g fill="#dadada"><rect x="1" y="1" width="1.6" height="1.6"/><rect x="3.1" y="3.1" width="1.6" height="1.6"/><rect x="5.2" y="5.2" width="1.6" height="1.6"/><rect x="7.3" y="7.3" width="1.6" height="1.6"/><rect x="9.4" y="9.4" width="1.6" height="1.6"/></g></svg>
<svg style="left:480.5px;top:496.5px" width="12" height="13" viewBox="0 0 12 13"><g fill="none" stroke="#c8c8c8" stroke-width="1.45"><path d="M0.4 12.1 C1.9 12.5 2.7 11.7 3 10.2 L4.5 3 C4.85 1.4 5.9 0.7 7.7 1"/><path d="M1.8 4.8 H6.4"/><path d="M5.4 4.8 C6.6 4.6 6.9 5.6 7.5 7.2 C8.1 8.8 8.6 9.9 10 9.6"/><path d="M11 4.7 L4.5 10"/></g></svg>
<svg style="left:495px;top:499px" width="10" height="9" viewBox="0 0 10 9"><rect width="10" height="9" fill="#9c9c9c"/><rect x="3" y="0" width="7" height="7" fill="#303030"/><rect x="3" y="7" width="4" height="2" fill="#6a6a6a"/><rect x="1" y="1" width="1.2" height="1.1" fill="#2a2a2a"/><rect x="7.8" y="1" width="1.2" height="1.1" fill="#2a2a2a"/><rect x="1" y="3.1" width="1.2" height="1.1" fill="#2a2a2a"/><rect x="7.8" y="3.1" width="1.2" height="1.1" fill="#2a2a2a"/><rect x="1" y="5.2" width="1.2" height="1.1" fill="#2a2a2a"/><rect x="7.8" y="5.2" width="1.2" height="1.1" fill="#2a2a2a"/><rect x="1" y="7.2" width="1.2" height="1.1" fill="#2a2a2a"/><rect x="7.8" y="7.2" width="1.2" height="1.1" fill="#2a2a2a"/></svg>
<svg style="left:497px;top:497px" width="10" height="9" viewBox="0 0 10 9"><rect width="10" height="9" fill="#d6d6d6"/><rect x="3" y="1" width="4.4" height="3" fill="#666"/><rect x="3" y="5" width="4.4" height="3" fill="#666"/><rect x="1" y="1" width="1.2" height="1.1" fill="#2a2a2a"/><rect x="7.8" y="1" width="1.2" height="1.1" fill="#2a2a2a"/><rect x="1" y="3.1" width="1.2" height="1.1" fill="#2a2a2a"/><rect x="7.8" y="3.1" width="1.2" height="1.1" fill="#2a2a2a"/><rect x="1" y="5.2" width="1.2" height="1.1" fill="#2a2a2a"/><rect x="7.8" y="5.2" width="1.2" height="1.1" fill="#2a2a2a"/><rect x="1" y="7.2" width="1.2" height="1.1" fill="#2a2a2a"/><rect x="7.8" y="7.2" width="1.2" height="1.1" fill="#2a2a2a"/></svg>
<svg style="left:510px;top:496px" width="13" height="13" viewBox="0 0 13 13"><circle cx="4.6" cy="8.6" r="3.6" fill="#3a3a3a" stroke="#707070" stroke-width="1"/><circle cx="6.4" cy="6.6" r="3.6" fill="#444" stroke="#858585" stroke-width="1"/><circle cx="8.4" cy="4.6" r="3.7" fill="#666" stroke="#ababab" stroke-width="1.1"/></svg>
<svg style="left:525px;top:496px" width="13" height="13" viewBox="0 0 13 13"><circle cx="6.4" cy="6.4" r="5.2" fill="#fff"/><path d="M2.72 10.08 A5.2 5.2 0 0 1 10.08 2.72 Z" fill="#000"/><circle cx="6.4" cy="6.4" r="5.2" fill="none" stroke="#e6e6e6" stroke-width="1"/></svg>
<svg style="left:541px;top:497px" width="11" height="12" viewBox="0 0 11 12"><path d="M5.5 0.6 L10.4 3.2 V8.8 L5.5 11.4 L0.6 8.8 V3.2 Z" fill="#5a5a5a" stroke="#c0c0c0" stroke-width="1"/><path d="M0.6 3.2 L5.5 5.8 L10.4 3.2 M5.5 5.8 V11.4" fill="none" stroke="#c0c0c0" stroke-width="1"/></svg>
<!-- row icons -->
<svg style="left:7px;top:515px" width="13" height="9" viewBox="0 0 13 9"><path d="M0.7 4.5 Q6.5 -2 12.3 4.5 Q6.5 11 0.7 4.5 Z" fill="#242424" stroke="#bcbcbc" stroke-width="1.35" stroke-linejoin="round"/><circle cx="6.4" cy="4.4" r="2.7" fill="#161616"/><circle cx="7.5" cy="3.3" r="1" fill="#cfcfcf"/></svg>
<svg style="left:74px;top:515px" width="9" height="10" viewBox="0 0 9 10"><path d="M0.8 0.8 L8.4 5 L0.8 9.2 Z" fill="#d6d6d6"/></svg>
<svg style="left:436px;top:514px" width="12" height="11" viewBox="0 0 12 11"><path d="M2 6.2 A3.9 4.9 0 0 1 9.8 6.2" fill="none" stroke="#d6d6d6" stroke-width="1.4"/><path d="M5.9 1 V6.4 M2.2 3.5 H9.6" stroke="#d6d6d6" stroke-width="1" fill="none"/><rect x="0" y="7" width="11.6" height="1" fill="#d6d6d6"/><path d="M4.6 5.8 H7.2 V8.8 L5.9 10.3 L4.6 8.8 Z" fill="#d6d6d6"/></svg>
<svg style="left:465px;top:513px" width="13" height="13" viewBox="0 0 13 13"><path d="M1.2 11.8 L11.8 1.4" stroke="#c8c8c8" stroke-width="1.4" fill="none"/></svg>
<svg style="left:480.5px;top:513.5px" width="12" height="13" viewBox="0 0 12 13"><g fill="none" stroke="#cdcdcd" stroke-width="1.45"><path d="M0.4 12.1 C1.9 12.5 2.7 11.7 3 10.2 L4.5 3 C4.85 1.4 5.9 0.7 7.7 1"/><path d="M1.8 4.8 H6.4"/><path d="M5.4 4.8 C6.6 4.6 6.9 5.6 7.5 7.2 C8.1 8.8 8.6 9.9 10 9.6"/><path d="M11 4.7 L4.5 10"/></g></svg>
<svg style="left:572px;top:513px" width="12" height="12" viewBox="0 0 12 12"><path d="M6.2 6.4 C5.2 6.6 5 5.2 6 4.8 C7.6 4.2 8.6 5.8 8.2 7 C7.6 8.8 5.2 9 4 7.8 C2.4 6.2 3.2 3.4 5.4 2.6 C8.2 1.6 10.8 3.8 10.8 6.4 C10.8 8.4 9.6 10 8 10.8" fill="none" stroke="#d2d2d2" stroke-width="1.2" stroke-linecap="round"/></svg>

<!-- CTI -->
<div class="a" style="left:708px;top:463px;width:1px;height:8px;background:#f80c0c;"></div>
<div class="a" style="left:708px;top:488px;width:1px;height:58px;background:#f80c0c;"></div>

<svg style="left:701px;top:463px" width="7" height="8" viewBox="0 0 7 8"><path d="M6.4 0 V8 H3.6 A3.6 4 0 0 1 3.6 0 Z" fill="#38bdf6"/><rect x="3.6" y="1.6" width="1" height="4.8" fill="#1f86b8"/></svg>
<svg style="left:701px;top:492px" width="7" height="15" viewBox="0 0 7 15"><path d="M6.4 0 V15 H3.4 A3.4 3.6 0 0 1 0 11.4 V3.6 A3.4 3.6 0 0 1 3.4 0 Z" fill="#38bdf6"/><path d="M4.6 1.6 H3.6 A1.8 2 0 0 0 1.9 3.6 V11.4 A1.8 2 0 0 0 3.6 13.4 H4.6" fill="none" stroke="#1a7fb0" stroke-width="0.9"/></svg>
<svg style="left:702px;top:476px" width="13" height="14" viewBox="0 0 13 14"><path d="M0.5 0.3 H12.5 V6.2 L6.5 13.9 L0.5 6.2 Z" fill="#3cc0f8"/><g fill="#123848"><rect x="3" y="2.6" width="1" height="2.6"/><rect x="6" y="2.6" width="1" height="2.6"/><rect x="9" y="2.6" width="1" height="2.6"/></g><g fill="#06141a"><rect x="5" y="6.8" width="3" height="1"/><rect x="6" y="6.8" width="1" height="7"/></g></svg>


</body>
</html>
